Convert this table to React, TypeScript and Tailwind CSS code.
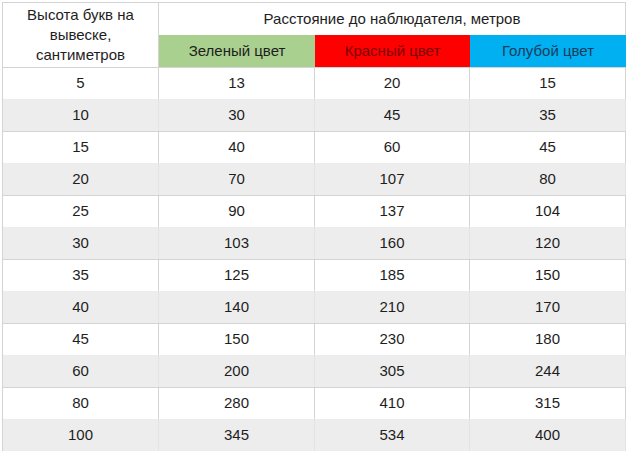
import React from "react";

const rows = [
  [5, 13, 20, 15],
  [10, 30, 45, 35],
  [15, 40, 60, 45],
  [20, 70, 107, 80],
  [25, 90, 137, 104],
  [30, 103, 160, 120],
  [35, 125, 185, 150],
  [40, 140, 210, 170],
  [45, 150, 230, 180],
  [60, 200, 305, 244],
  [80, 280, 410, 315],
  [100, 345, 534, 400],
];

export default function App() {
  return (
    <div
      className="w-[629px] h-[453px] overflow-hidden bg-white text-[#1e1e1e] text-[15px]"
      style={{ fontFamily: '"Liberation Sans", Arial, sans-serif' }}
    >
      <div className="ml-[2px] mt-[2px] w-[624px] border-l border-t border-[#d4d4d4]">
        <div className="flex h-[64px]">
          <div className="w-[156px] shrink-0 border-r border-[#d4d4d4] flex flex-col items-center justify-center leading-[20px] text-center">
            <span>Высота букв на</span>
            <span>вывеске,</span>
            <span>сантиметров</span>
          </div>
          <div className="flex flex-col flex-1">
            <div className="h-[32px] flex items-center justify-center border-r border-[#d4d4d4]">
              Расстояние до наблюдателя, метров
            </div>
            <div className="flex h-[32px]">
              <div className="w-[156px] bg-[#a9d08e] flex items-center justify-center">Зеленый цвет</div>
              <div className="w-[155px] bg-[#ff0000] text-[#7a0000] flex items-center justify-center">Красный цвет</div>
              <div className="flex-1 bg-[#00b0f0] text-[#183c5e] flex items-center justify-center">Голубой цвет</div>
            </div>
          </div>
        </div>
        {rows.map((r, i) => (
          <div
            key={i}
            className={
              "flex h-[32px] " + (i % 2 === 1 ? "bg-[#ededed]" : "bg-white border-t border-[#d4d4d4]")
            }
          >
            {r.map((v, j) => (
              <div
                key={j}
                className={
                  (j === 3 ? "flex-1 " : j === 2 ? "w-[155px] " : "w-[156px] ") +
                  "flex items-center justify-center border-r " +
                  (i % 2 === 1 ? "border-[#e3e3e3]" : "border-[#d4d4d4]")
                }
              >
                {v}
              </div>
            ))}
          </div>
        ))}
      </div>
    </div>
  );
}
